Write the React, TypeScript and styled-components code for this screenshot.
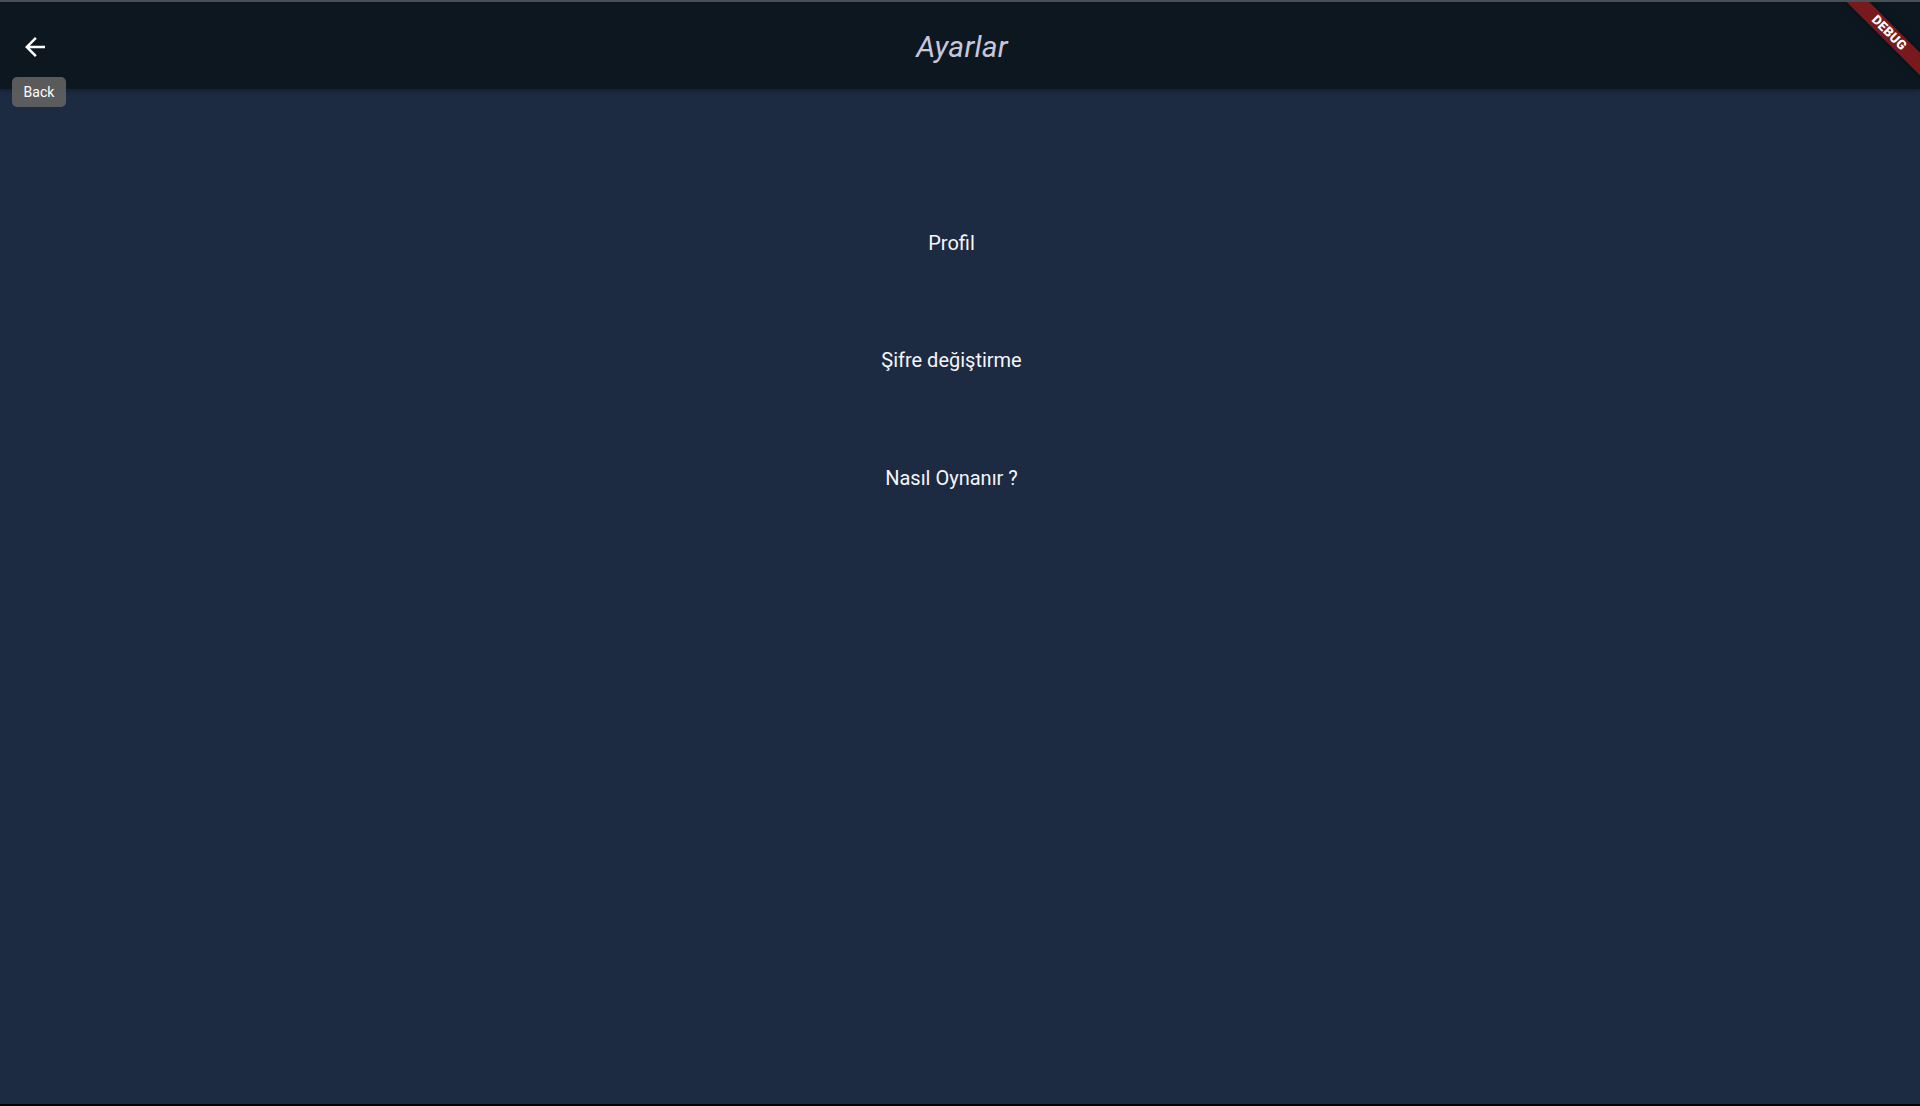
import React from "react";
import styled, { createGlobalStyle } from "styled-components";

const GlobalStyle = createGlobalStyle`
  html, body {
    margin: 0;
    padding: 0;
    background: #1c2a42;
    font-family: Roboto, "Liberation Sans", Arial, sans-serif;
  }
  * { box-sizing: border-box; }
`;

const Page = styled.div`
  position: relative;
  height: 1106px;
  display: flex;
  flex-direction: column;
  background: #1c2a42;
  border-top: 2px solid #4a4f56;
  border-bottom: 2px solid #000000;
  overflow: hidden;
`;

const AppBar = styled.header`
  position: relative;
  height: 87px;
  flex: 0 0 auto;
  display: grid;
  grid-template-columns: 1fr auto 1fr;
  align-items: center;
  background: #0d1720;
  box-shadow: 0 2px 4px rgba(0, 0, 0, 0.25);
  z-index: 1;
`;

const BackButton = styled.button`
  justify-self: start;
  margin-left: 20px;
  margin-top: 3px;
  width: 30px;
  height: 30px;
  padding: 0;
  border: none;
  background: transparent;
  color: #ffffff;
  display: flex;
  align-items: center;
  justify-content: center;
  cursor: pointer;
`;

const Title = styled.h1`
  margin: 2px 0 0 4px;
  font-family: Roboto, "Liberation Sans", Arial, sans-serif;
  font-style: italic;
  font-weight: 400;
  font-size: 30px;
  color: #c8c6da;
  letter-spacing: 0.2px;
`;

const Tooltip = styled.div`
  position: absolute;
  left: 12px;
  top: 75px;
  width: 54px;
  height: 30px;
  border-radius: 5px;
  background: rgba(97, 97, 97, 0.92);
  color: #ffffff;
  font-size: 14px;
  display: flex;
  align-items: center;
  justify-content: center;
  z-index: 3;
`;

const BannerCorner = styled.div`
  position: absolute;
  top: 0;
  right: 0;
  width: 80px;
  height: 80px;
  overflow: hidden;
  pointer-events: none;
  z-index: 4;
`;

const BannerBand = styled.div`
  position: absolute;
  left: -3px;
  top: 23px;
  width: 104px;
  height: 16px;
  transform: rotate(45deg);
  background: rgba(183, 28, 28, 0.63);
  box-shadow: 0 0 6px rgba(0, 0, 0, 0.4);
  color: #ffffff;
  font-family: Roboto, "Liberation Sans", Arial, sans-serif;
  font-weight: 900;
  font-size: 13px;
  line-height: 16px;
  text-align: center;
  letter-spacing: 0.3px;
`;

const Menu = styled.nav`
  display: flex;
  flex-direction: column;
  padding-top: 95px;
  padding-right: 17px;
`;

const MenuItem = styled.div`
  height: 117.5px;
  display: flex;
  align-items: center;
  justify-content: center;
  color: #f6f6f8;
  font-size: 20px;
  line-height: 24px;
  cursor: pointer;
`;

const ArrowBack = () => (
  <svg width="30" height="30" viewBox="0 0 24 24" fill="currentColor">
    <path d="M20 11H7.83l5.59-5.59L12 4l-8 8 8 8 1.41-1.41L7.83 13H20v-2z" />
  </svg>
);

const items = ["Profil", "Şifre değiştirme", "Nasıl Oynanır ?"];

export default function App() {
  return (
    <>
      <GlobalStyle />
      <Page>
        <AppBar>
          <BackButton aria-label="Back">
            <ArrowBack />
          </BackButton>
          <Title>Ayarlar</Title>
          <span />
          <Tooltip>Back</Tooltip>
          <BannerCorner>
            <BannerBand>DEBUG</BannerBand>
          </BannerCorner>
        </AppBar>
        <Menu>
          {items.map((t) => (
            <MenuItem key={t}>{t}</MenuItem>
          ))}
        </Menu>
      </Page>
    </>
  );
}
